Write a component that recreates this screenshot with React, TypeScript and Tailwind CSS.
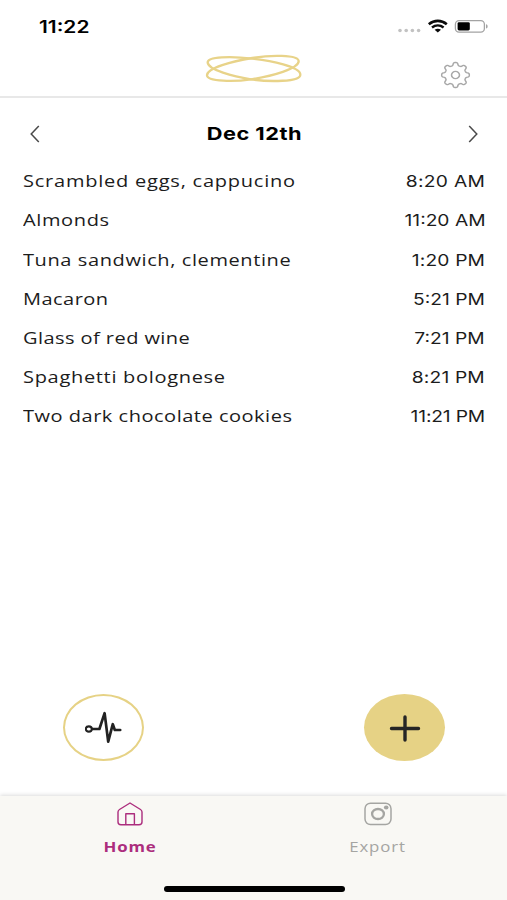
import clsx from "clsx";

type Entry = { name: string; time: string; nameFit: string; timeFit: string };

const ENTRIES: Entry[] = [
  { name: "Scrambled eggs, cappucino", time: "8:20 AM", nameFit: "tracking-[0.62px]", timeFit: "tracking-[0.25px]" },
  { name: "Almonds", time: "11:20 AM", nameFit: "tracking-[0.5px]", timeFit: "tracking-[0px]" },
  { name: "Tuna sandwich, clementine", time: "1:20 PM", nameFit: "tracking-[0.48px]", timeFit: "tracking-[0.13px]" },
  { name: "Macaron", time: "5:21 PM", nameFit: "tracking-[0.38px]", timeFit: "tracking-[0px]" },
  { name: "Glass of red wine", time: "7:21 PM", nameFit: "tracking-[0.35px]", timeFit: "tracking-[0px]" },
  { name: "Spaghetti bolognese", time: "8:21 PM", nameFit: "tracking-[0.55px]", timeFit: "tracking-[0.13px]" },
  { name: "Two dark chocolate cookies", time: "11:21 PM", nameFit: "tracking-[0.41px]", timeFit: "tracking-[-0.13px]" },
];

// Eight rounded teeth around a circle
function gearPath(): string {
  const pts: string[] = [];
  for (let i = 0; i < 160; i++) {
    const a = (i / 160) * Math.PI * 2;
    const r = 10.4 + 1.4 * Math.tanh(2 * Math.cos(8 * a));
    pts.push(`${(r * Math.cos(a)).toFixed(2)} ${(r * Math.sin(a)).toFixed(2)}`);
  }
  return `M${pts.join("L")}Z`;
}

function StatusIcons() {
  return (
    <svg width="92" height="18" viewBox="397 17 92 18" fill="none">
      {[400, 406.2, 412.4, 418.6].map((x) => (
        <circle key={x} cx={x} cy="30.5" r="1.8" fill="#c2c2c2" />
      ))}
      <path d="M428.8 24.2C434.2 19.8 441.4 19.8 446.8 24.2" stroke="#0b0b0b" strokeWidth="2.6" />
      <path d="M432 27.5C435.4 24.8 440.2 24.8 443.6 27.5" stroke="#0b0b0b" strokeWidth="2.4" />
      <path d="M434.6 29.8C436.6 28.4 439 28.4 441 29.8L437.8 32.6Z" fill="#0b0b0b" />
      <rect x="455.4" y="20.6" width="29" height="11.6" rx="3.6" stroke="#a3a3a3" strokeWidth="1.3" />
      <rect x="457.6" y="22.2" width="12.2" height="8.2" rx="1.4" fill="#000" />
      <path d="M486 24.2c2.2.6 2.2 3.8 0 4.4z" fill="#a3a3a3" />
    </svg>
  );
}

function Logo() {
  return (
    <svg width="98" height="32" viewBox="48 39 294 96" fill="none" stroke="#e8d389" strokeWidth="7">
      <path d="M56 67C56 50 125 48 190 56C245 62 334 80 334 104C334 126 240 126 186 118C135 110 56 90 56 67Z" />
      <path d="M54 106C54 84 130 64 190 54C240 45 329 43 329 64C329 86 250 108 186 118C140 125 54 126 54 106Z" />
    </svg>
  );
}

function Chevron({ flip }: { flip?: boolean }) {
  return (
    <svg width="12" height="20" viewBox="0 0 12 20" fill="none" className={clsx(flip && "-scale-x-100")}>
      <path d="M9.8 2L2.2 10L9.8 18" stroke="#4a4a4a" strokeWidth="1.5" />
    </svg>
  );
}

export default function App() {
  return (
    <div className="flex h-[900px] w-[507px] flex-col overflow-hidden bg-white font-['Open_Sans',sans-serif] text-[#1c1c1c]">
      {/* Status bar */}
      <div className="flex h-[50px] items-start justify-between pt-[17px] pr-[18px] pl-[39px]">
        <span className="origin-left scale-x-[1.23] font-['Inter',sans-serif] text-[17px] leading-5 font-semibold text-black">
          11:22
        </span>
        <StatusIcons />
      </div>

      {/* Header */}
      <div className="grid h-12 grid-cols-[1fr_98px_1fr] border-b-2 border-[#e8e8e8] pt-[3px]">
        <div />
        <Logo />
        <div className="flex justify-end pt-2 pr-9">
          <svg width="31" height="28" viewBox="-13.2 -13.2 26.4 26.4" preserveAspectRatio="none" fill="none" stroke="#a8a8a8" strokeWidth="1.3">
            <path d={gearPath()} />
            <circle r="3.4" />
          </svg>
        </div>
      </div>

      {/* Day picker */}
      <div className="flex h-[63.7px] items-center justify-between pt-[9px] pr-7 pb-0 pl-[29px]">
        <Chevron />
        <h1 className="scale-x-[1.21] font-['Inter',sans-serif] text-lg leading-6 font-bold tracking-[0.4px] text-black">
          Dec 12th
        </h1>
        <Chevron flip />
      </div>

      {/* Entries */}
      <ul className="flex flex-col pr-[22px] pl-[23px]">
        {ENTRIES.map((e) => (
          <li key={e.name} className="flex h-[39.17px] items-center justify-between text-base leading-6 whitespace-nowrap">
            <span className={clsx("origin-left scale-x-125 font-medium", e.nameFit)}>{e.name}</span>
            <span className={clsx("origin-right scale-x-120 font-['Inter',sans-serif]", e.timeFit)}>{e.time}</span>
          </li>
        ))}
      </ul>

      {/* Actions */}
      <div className="mt-auto mb-[35px] flex justify-between pr-[62px] pl-[63px]">
        <button className="flex h-[67px] w-[81px] items-center justify-center rounded-[50%] border-2 border-[#e6d285]">
          <svg width="38" height="34" viewBox="0.8 0.8 38 34" fill="none" stroke="#222" strokeWidth="2.7" strokeLinejoin="round" strokeLinecap="round">
            <ellipse cx="4.6" cy="18.8" rx="3" ry="2.6" strokeWidth="2.1" />
            <path d="M8 18.8H15.2L20.4 3L24 31.4L28.6 14L30.6 19.8H36" />
          </svg>
        </button>
        <button className="flex h-[67px] w-[81px] items-center justify-center rounded-[50%] bg-[#e6d285]">
          <svg width="32" height="28" viewBox="0 0 32 28" stroke="#252525" strokeWidth="3.4" strokeLinecap="round">
            <path d="M2.5 14.5H29.5M16 3V26" />
          </svg>
        </button>
      </div>

      {/* Tab bar */}
      <nav className="flex h-[104px] flex-col items-center justify-between bg-[#f9f8f4] pb-2 shadow-[0_-1px_4px_rgba(0,0,0,0.14)]">
        <div className="flex w-full justify-between pt-[4.5px] pr-[79px] pl-[80px] text-sm leading-5">
          <div className="flex w-[100px] flex-col items-center gap-2.5 text-[#ac2d7d]">
            <svg width="28" height="26" viewBox="0 0 28 26" fill="none" stroke="currentColor" strokeWidth="1.4" strokeLinejoin="round">
              <path d="M14 2L24.5 8.5Q26 9.5 26 11V21Q26 23.7 23 23.7H5Q2 23.7 2 21V11Q2 9.5 3.5 8.5Z" />
              <path d="M9.8 23.7V12.8H18.4V23.7" />
            </svg>
            <span className="scale-x-120 font-bold tracking-[0.7px]">Home</span>
          </div>
          <div className="flex w-[100px] flex-col items-center gap-2.5 text-[#a5a5a2]">
            <svg width="30" height="26" viewBox="0 0 30 26" fill="none" stroke="currentColor">
              <rect x="2" y="2.2" width="26" height="21.4" rx="5.5" strokeWidth="1.5" />
              <ellipse cx="15" cy="13" rx="5.9" ry="5" strokeWidth="2.3" />
              <ellipse cx="23.2" cy="6.5" rx="2.3" ry="1.9" fill="currentColor" stroke="none" />
            </svg>
            <span className="scale-x-120 font-medium tracking-[0.7px]">Export</span>
          </div>
        </div>
        <div className="h-[6px] w-[181px] translate-x-px rounded-full bg-black" />
      </nav>
    </div>
  );
}
